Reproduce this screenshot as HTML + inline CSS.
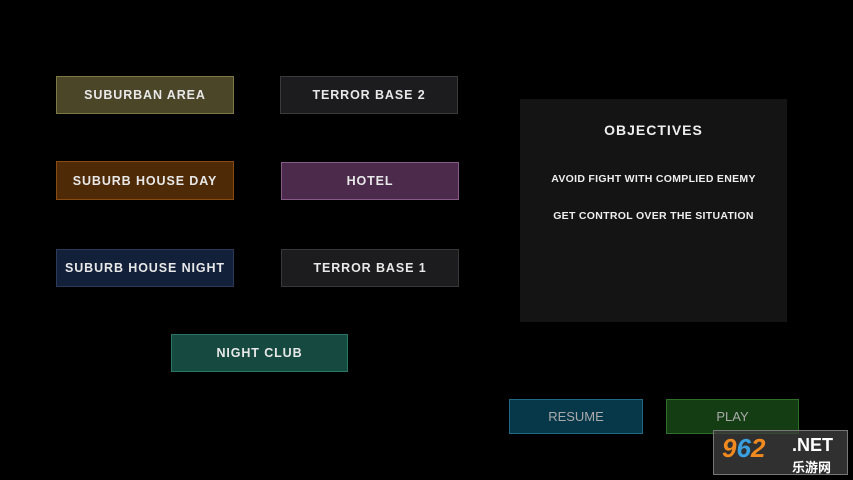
<!DOCTYPE html>
<html><head><style>
body{margin:0;width:853px;height:480px;background:#000;position:relative;overflow:hidden;font-family:"Liberation Sans",sans-serif}
.b{position:absolute;box-sizing:border-box;display:flex;align-items:center;justify-content:center;color:#e8e8e8;font-weight:bold;font-size:12.5px;letter-spacing:0.9px;border:1px solid}
.o{position:absolute;left:520px;top:99px;width:267px;height:223px;background:#141414;color:#eee;text-align:center;font-weight:bold}
</style></head><body>
<div class="b" style="left:56px;top:76px;width:178px;height:38px;background:#4b4628;border-color:#7d7645">SUBURBAN AREA</div>
<div class="b" style="left:280px;top:76px;width:178px;height:38px;background:#1c1b1d;border-color:#3a393c">TERROR BASE 2</div>
<div class="b" style="left:56px;top:161px;width:178px;height:39px;background:#4e2a06;border-color:#8a4a10">SUBURB HOUSE DAY</div>
<div class="b" style="left:281px;top:162px;width:178px;height:38px;background:#4b2a4b;border-color:#875b87">HOTEL</div>
<div class="b" style="left:56px;top:249px;width:178px;height:38px;background:#12203a;border-color:#2b3a58">SUBURB HOUSE NIGHT</div>
<div class="b" style="left:281px;top:249px;width:178px;height:38px;background:#1c1b1d;border-color:#38373a">TERROR BASE 1</div>
<div class="b" style="left:171px;top:334px;width:177px;height:38px;background:#164a40;border-color:#2b7565">NIGHT CLUB</div>
<div class="o"><div style="margin-top:23px;font-size:14px;letter-spacing:1px;line-height:16px">OBJECTIVES</div>
<div style="margin-top:34px;font-size:10.5px;line-height:14px;letter-spacing:0.3px">AVOID FIGHT WITH COMPLIED ENEMY</div>
<div style="margin-top:23px;font-size:10.5px;line-height:14px;letter-spacing:0.3px">GET CONTROL OVER THE SITUATION</div></div>
<div class="b" style="left:509px;top:399px;width:134px;height:35px;background:#07384a;border-color:#1f6b82;font-weight:normal;color:#aaa;font-size:13px;letter-spacing:0">RESUME</div>
<div class="b" style="left:666px;top:399px;width:133px;height:35px;background:#143d14;border-color:#2f6f2a;font-weight:normal;color:#aaa;font-size:13px;letter-spacing:0">PLAY</div>
<div style="position:absolute;left:713px;top:430px;width:135px;height:45px;background:rgba(60,60,60,.8);border:1px solid #777;box-sizing:border-box">
<span style="position:absolute;left:8px;top:2px;font:italic bold 26px 'Liberation Sans';color:#f08a20">9<span style="color:#3aa0e0">6</span>2</span>
<span style="position:absolute;left:78px;top:4px;font:bold 18px 'Liberation Sans';color:#fff">.NET</span>
<span style="position:absolute;left:78px;top:26px;font:bold 13px 'Noto Sans CJK SC',sans-serif;color:#fff">乐游网</span></div>
</body></html>
